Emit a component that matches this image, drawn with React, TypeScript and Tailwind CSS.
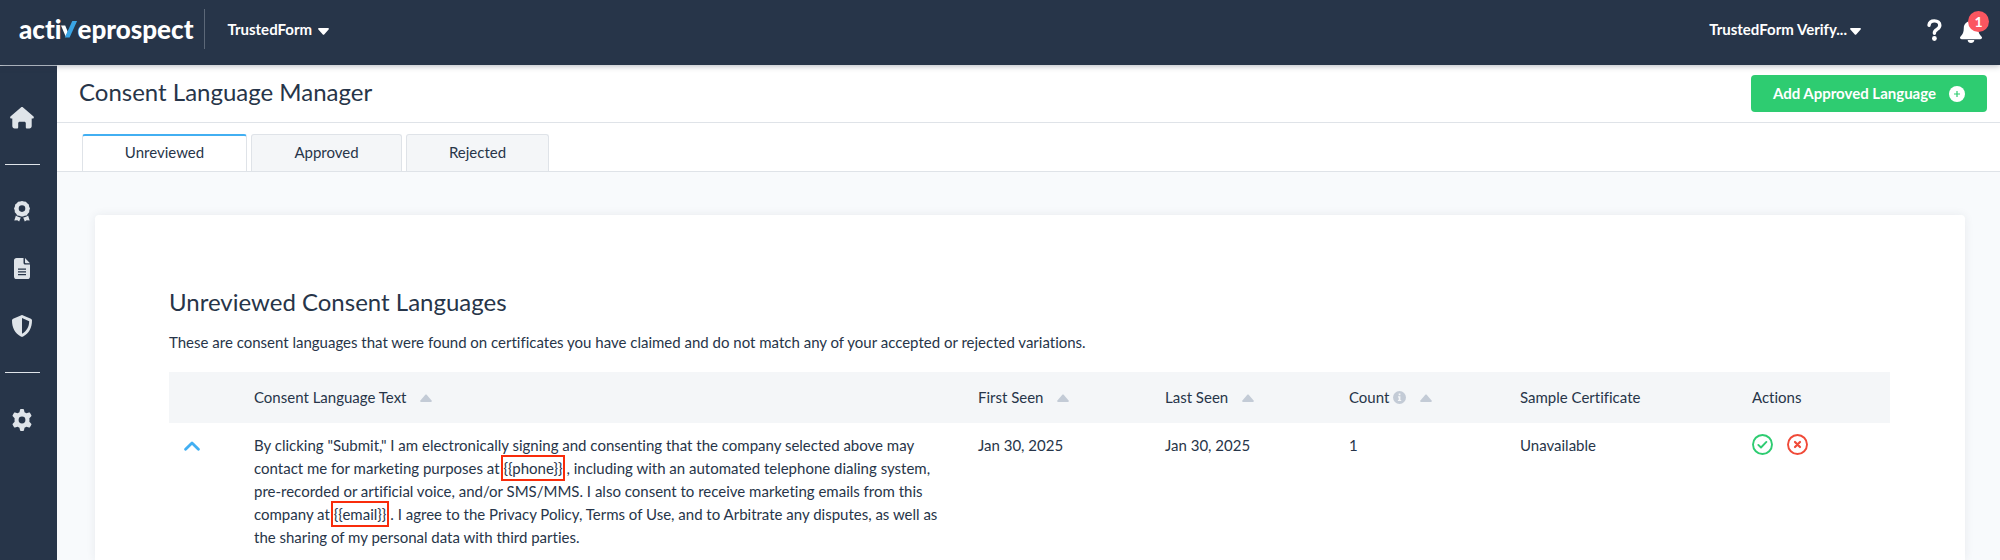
import { useState, type ReactNode } from "react";

function CaretDown() {
  return (
    <svg width="11" height="7" viewBox="0 0 11 7" fill="currentColor" aria-hidden="true">
      <path d="M1 0h9c.9 0 1.2 1 .6 1.6L6.2 6.4c-.4.4-1 .4-1.4 0L.4 1.6C-.2 1 .1 0 1 0z" />
    </svg>
  );
}

function SortUp() {
  return (
    <svg width="12" height="8" viewBox="0 0 12 8" fill="#c3cbd6" aria-hidden="true">
      <path d="M1 8h10c.9 0 1.3-1 .6-1.6L6.7.8c-.4-.4-1-.4-1.4 0L.4 6.4C-.3 7 .1 8 1 8z" />
    </svg>
  );
}

function Logo() {
  return (
    <a href="#home" className="flex items-center text-[26px] leading-8 font-black text-white">
      <span>acti</span>
      <svg className="-mx-px" width="18" height="18" viewBox="0 0 18 18" aria-hidden="true">
        <path d="M1 5.5h4.2l2.6 6.5-2.1 4.500z" fill="#fff" />
        <path d="M12.300 1h4.800L9.600 17.500H4.800z" fill="#3aa5e6" />
      </svg>
      <span>eprospect</span>
    </a>
  );
}

function HouseIcon() {
  return (
    <svg width="24" height="22" viewBox="0 0 24 22" fill="currentColor" aria-hidden="true">
      <path d="M10.900.4c.6-.5 1.600-.5 2.200 0l10.200 8.900c1 .9.500 2.200-.7 2.200h-.9V19c0 1.600-1 2.500-2.300 2.500h-2.300c-.8 0-1.300-.5-1.300-1.300V16.300c0-.9-.6-1.500-1.500-1.500H9.700c-.9 0-1.500.6-1.500 1.500v3.900c0 .8-.5 1.300-1.300 1.300H4.600C3.300 21.500 2.300 20.600 2.300 19v-7.500h-.9c-1.200 0-1.700-1.300-.7-2.200z" />
    </svg>
  );
}

function AwardIcon() {
  return (
    <svg width="16" height="21" viewBox="0 0 16 21" fill="currentColor" aria-hidden="true">
      <path
        fillRule="evenodd"
        d="M8 0l1.900.6 2 .2 1.300 1.500 1.600 1.200.3 2 .9 1.900-.7 1.800-.1 2.100-1.400 1.400-1.100 1.700-2 .4L8.900 15.500H7.100l-1.800-.7-2-.4-1.100-1.700L.8 11.300.7 9.200 0 7.400l.9-1.900.3-2 1.600-1.200L4.100.8l2-.2zM8 4.300a3.300 3.300 0 1 0 0 6.600 3.300 3.300 0 0 0 0-6.600z"
      />
      <path d="M1.900 14.600c1.300 1.200 2.900 1.700 4.900 1.900L5.200 20.600l-1.900-1.300-3 .1z" />
      <path d="M14.100 14.600c-1.300 1.200-2.900 1.700-4.900 1.900l1.600 4.100 1.900-1.300 3 .1z" />
    </svg>
  );
}

function FileIcon() {
  return (
    <svg width="16" height="21" viewBox="0 0 16 21" aria-hidden="true">
      <path
        d="M2.600 0H9.500v4.800c0 1.100.7 1.800 1.800 1.800H16v11.800c0 1.600-1 2.600-2.600 2.600H2.600C1 21 0 20 0 18.400V2.600C0 1 1 0 2.600 0z"
        fill="currentColor"
      />
      <path d="M11 0l5 5.200h-4.200c-.5 0-.8-.3-.8-.8z" fill="currentColor" />
      <path d="M4 11.200h8M4 13.900h8M4 16.600h8" stroke="#273549" strokeWidth="1.2" />
    </svg>
  );
}

function ShieldIcon() {
  return (
    <svg width="20" height="22" viewBox="0 0 20 22" fill="currentColor" aria-hidden="true">
      <path
        fillRule="evenodd"
        d="M9.400.2c.4-.2.800-.2 1.200 0l8.300 3.500c.7.3 1.100.9 1.100 1.600 0 7.400-2.800 13.100-9.200 16.400-.5.2-1.100.2-1.600 0C2.800 18.400 0 12.700 0 5.300c0-.7.4-1.300 1.100-1.600zM10 3.100v15.700c4.800-2.800 7.100-7 7.200-12.600z"
      />
    </svg>
  );
}

function GearIcon() {
  return (
    <svg width="22" height="22" viewBox="2 2 20 20" fill="currentColor" aria-hidden="true">
      <path
        fillRule="evenodd"
        d="M10.200 2.600c.1-.4.400-.6.800-.6h2c.4 0 .7.200.8.6l.5 2.300 1.700 1 2.300-.7c.4-.1.700 0 .9.300l1.300 2.200c.2.300.1.700-.1 1L18.700 10.300c.1 1.100.1 2.300 0 3.400l1.700 1.600c.2.300.3.700.1 1l-1.300 2.200c-.2.300-.5.400-.9.300l-2.300-.7-1.700 1-.5 2.300c-.1.400-.4.600-.8.600h-2c-.4 0-.7-.2-.8-.6l-.5-2.300-1.700-1-2.300.7c-.4.1-.7 0-.9-.3l-1.300-2.200c-.2-.3-.1-.7.1-1l1.700-1.600c-.1-1.100-.1-2.300 0-3.400L3.600 8.700c-.2-.3-.3-.7-.1-1l1.300-2.200c.2-.3.5-.4.9-.3l2.300.7 1.700-1zM12 8.900a3.100 3.100 0 1 0 0 6.200 3.100 3.100 0 0 0 0-6.200z"
      />
    </svg>
  );
}

function SideLink({ label, children }: { label: string; children: ReactNode }) {
  return (
    <a href={"#" + label.toLowerCase()} aria-label={label} className="flex h-[57px] items-center justify-center pr-px text-[#dfe4e9]">
      {children}
    </a>
  );
}

function SideRule() {
  return <hr className="my-[18px] h-px border-0 bg-[#dfe4e9]" />;
}

function SortHeader({ label, info }: { label: string; info?: boolean }) {
  return (
    <th scope="col" className="p-0 text-left font-normal">
      <button type="button" className="flex items-center">
        {label}
        {info && (
          <svg className="ml-1" width="13" height="13" viewBox="0 0 13 13" aria-hidden="true">
            <circle cx="6.5" cy="6.5" r="6.5" fill="#c3cbd6" />
            <path d="M5.700 2.600h1.700v1.600H5.700zM5 5.300h2.400v3.600h.8V10H4.900V8.900h.8V6.400H5z" fill="#f4f6f8" />
          </svg>
        )}
        <span className="ml-[14px]">
          <SortUp />
        </span>
      </button>
    </th>
  );
}

function Token({ children }: { children: ReactNode }) {
  return (
    <span className="relative mx-1">
      {children}
      <span className="absolute -inset-x-[3px] -top-1 -bottom-1 border-2 border-[#f92c0b]" />
    </span>
  );
}

const tabs = [
  { name: "Unreviewed", width: "w-[165px]" },
  { name: "Approved", width: "w-[151px]" },
  { name: "Rejected", width: "w-[143px]" },
];

export default function App() {
  const [active, setActive] = useState("Unreviewed");
  return (
    <div className="flex min-h-screen flex-col bg-[#f8fafc] font-['Lato',sans-serif] text-[15px] leading-[23px] text-[#273549] [font-variant-ligatures:none]">
      <header className="z-10 flex h-[65px] items-center bg-[#273549] pr-[18px] pb-[7px] pl-[19px] font-bold text-white shadow-[0_1px_6px_rgba(39,53,73,0.35)]">
        <Logo />
        <div className="ml-[11px] h-10 w-px bg-[#5c6878]" />
        <button type="button" className="ml-[22px] flex items-center gap-[6px]">
          TrustedForm
          <span className="pt-1">
            <CaretDown />
          </span>
        </button>
        <button type="button" className="ml-auto flex items-center gap-[3px]">
          TrustedForm Verify...
          <span className="pt-1">
            <CaretDown />
          </span>
        </button>
        <button type="button" aria-label="Help" className="ml-[66px] pt-px">
          <svg width="15" height="22" viewBox="0 0 15 22" aria-hidden="true">
            <path d="M2 6.300C2.300 3.500 4.300 1.900 7.400 1.900c3.300 0 5.400 1.700 5.400 4.300 0 2-1.100 3.100-2.900 4.200-1.800 1-2.500 1.800-2.500 3.300v.6" fill="none" stroke="#fff" strokeWidth="3.4" strokeLinecap="round" />
            <circle cx="7.4" cy="19.500" r="2.400" fill="#fff" />
          </svg>
        </button>
        <button type="button" aria-label="Notifications" className="relative ml-[18px] pt-1">
          <svg width="22" height="24" viewBox="0 0 22 24" fill="#fff" aria-hidden="true">
            <path d="M11 0c.9 0 1.500.6 1.500 1.500v.8c3.300.6 5.700 3.300 5.700 6.700 0 4.300 1 6.100 3.200 8.400 1.200 1.200.5 2.800-1.100 2.800H1.700c-1.600 0-2.300-1.600-1.100-2.800C2.800 15.100 3.800 13.300 3.800 9c0-3.400 2.400-6.100 5.700-6.700v-.8C9.500.6 10.100 0 11 0zM7.700 21h6.600c0 1.700-1.500 3-3.300 3s-3.300-1.300-3.300-3z" />
          </svg>
          <span className="absolute -top-1 -right-[7px] flex size-[21px] items-center justify-center rounded-full bg-[#fb5660] text-sm leading-none">1</span>
        </button>
      </header>

      <div className="flex flex-1">
        <nav aria-label="Main" className="w-[57px] shrink-0 border-t border-[#c9cfd6] bg-[#273549] pt-[23px] pr-[17px] pl-[5px]">
          <SideLink label="Home">
            <HouseIcon />
          </SideLink>
          <SideRule />
          <SideLink label="Certificates">
            <AwardIcon />
          </SideLink>
          <SideLink label="Documents">
            <FileIcon />
          </SideLink>
          <SideLink label="Security">
            <ShieldIcon />
          </SideLink>
          <SideRule />
          <SideLink label="Settings">
            <GearIcon />
          </SideLink>
        </nav>

        <div className="min-w-0 flex-1">
          <div className="flex h-[58px] items-center justify-between border-b border-[#dfe3e8] bg-white pr-[13px] pl-[22px]">
            <h1 className="pb-1 text-2xl">Consent Language Manager</h1>
            <button type="button" className="flex h-[37px] items-center gap-[13px] rounded-[4px] bg-[#2ecc71] px-[22px] font-bold text-white">
              Add Approved Language
              <svg width="16" height="16" viewBox="0 0 16 16" aria-hidden="true">
                <circle cx="8" cy="8" r="8" fill="#fff" />
                <path d="M8 5v6M5 8h6" stroke="#2ecc71" strokeWidth="1.2" />
              </svg>
            </button>
          </div>

          <div role="tablist" className="flex h-[49px] items-end gap-1 border-b border-[#dfe3e8] bg-white pl-[25px]">
            {tabs.map((tab) => (
              <button
                key={tab.name}
                type="button"
                role="tab"
                aria-selected={active === tab.name}
                onClick={() => setActive(tab.name)}
                className={
                  "h-[37px] rounded-t-[3px] border-x border-[#dfe3e8] pb-[2px] " +
                  tab.width +
                  (active === tab.name ? " border-t-2 border-t-[#42aff2] bg-white" : " border-t bg-[#f4f6f8]")
                }
              >
                {tab.name}
              </button>
            ))}
          </div>

          <main className="pt-[43px] pr-[35px] pl-[38px]">
            <section className="min-h-[345px] rounded-t-[4px] bg-white pt-[71px] pr-[75px] pl-[74px] shadow-[0_0_10px_rgba(39,53,73,0.08)]">
              <h2 className="text-2xl leading-8">Unreviewed Consent Languages</h2>
              <p className="mt-[13px]">
                These are consent languages that were found on certificates you have claimed and do not match any of your accepted or rejected variations.
              </p>
              <table className="mt-[18px] w-full table-fixed border-collapse">
                <colgroup>
                  <col className="w-[85px]" />
                  <col />
                  <col className="w-[187px]" />
                  <col className="w-[184px]" />
                  <col className="w-[171px]" />
                  <col className="w-[232px]" />
                  <col className="w-[138px]" />
                </colgroup>
                <thead>
                  <tr className="h-[51px] bg-[#f4f6f8]">
                    <td className="p-0" />
                    <SortHeader label="Consent Language Text" />
                    <SortHeader label="First Seen" />
                    <SortHeader label="Last Seen" />
                    <SortHeader label="Count" info />
                    <th scope="col" className="p-0 text-left font-normal">Sample Certificate</th>
                    <th scope="col" className="p-0 text-left font-normal">Actions</th>
                  </tr>
                </thead>
                <tbody>
                  <tr className="align-top">
                    <td className="pt-[11px] pl-[15px]">
                      <button type="button" aria-label="Collapse row" className="flex h-[23px] items-center">
                        <svg width="16" height="10" viewBox="0 0 16 10" fill="none" stroke="#42aff2" strokeWidth="2.8" strokeLinecap="round" strokeLinejoin="round" aria-hidden="true">
                          <path d="M1.600 8.300L8 2l6.400 6.300" />
                        </svg>
                      </button>
                    </td>
                    <td className="pt-[11px] whitespace-nowrap">
                      By clicking "Submit," I am electronically signing and consenting that the company selected above may
                      <br />
                      contact me for marketing purposes at<Token>{"{{phone}}"}</Token>, including with an automated telephone dialing system,
                      <br />
                      pre-recorded or artificial voice, and/or SMS/MMS. I also consent to receive marketing emails from this
                      <br />
                      company at<Token>{"{{email}}"}</Token>. I agree to the Privacy Policy, Terms of Use, and to Arbitrate any disputes, as well as
                      <br />
                      the sharing of my personal data with third parties.
                    </td>
                    <td className="pt-[11px]">Jan 30, 2025</td>
                    <td className="pt-[11px]">Jan 30, 2025</td>
                    <td className="pt-[11px]">1</td>
                    <td className="pt-[11px]">Unavailable</td>
                    <td className="pt-[11px]">
                      <div className="flex gap-[14px]">
                        <button type="button" aria-label="Approve">
                          <svg width="21" height="21" viewBox="0 0 21 21" fill="none" stroke="#2ecc71" strokeWidth="1.9" strokeLinecap="round" strokeLinejoin="round" aria-hidden="true">
                            <circle cx="10.5" cy="10.5" r="9.5" />
                            <path d="M6.300 10.900l2.700 2.600 5.400-5.600" />
                          </svg>
                        </button>
                        <button type="button" aria-label="Reject">
                          <svg width="21" height="21" viewBox="0 0 21 21" fill="none" stroke="#f04a38" strokeWidth="1.9" strokeLinecap="round" aria-hidden="true">
                            <circle cx="10.5" cy="10.5" r="9.5" />
                            <path d="M8 8l5 5M13 8l-5 5" strokeWidth="2.2" />
                          </svg>
                        </button>
                      </div>
                    </td>
                  </tr>
                </tbody>
              </table>
            </section>
          </main>
        </div>
      </div>
    </div>
  );
}
